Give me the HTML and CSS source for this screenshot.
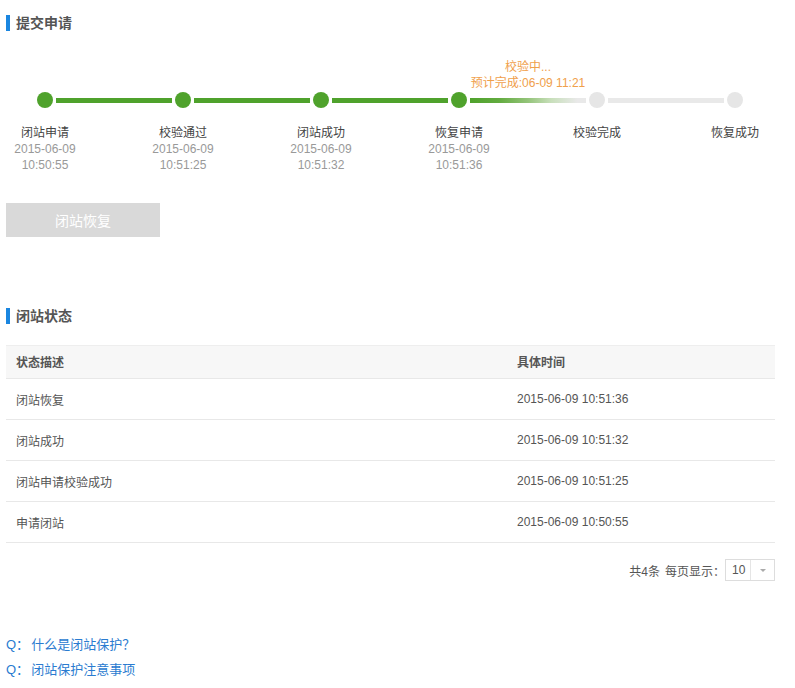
FILE: index.html
```html
<!DOCTYPE html>
<html lang="zh-CN">
<head>
<meta charset="utf-8">
<title>闭站保护</title>
<link rel="stylesheet" href="styles.css">
</head>
<body>
<div class="page">
  <h2 class="title">提交申请</h2>

  <div class="steps">
    <div class="note">校验中...<br>预计完成:06-09 11:21</div>

    <div class="step done first">
      <div class="track"><span class="half l"></span><span class="dot"></span><span class="half r"></span></div>
      <div class="label">闭站申请</div>
      <div class="time">2015-06-09<br>10:50:55</div>
    </div>
    <div class="step done">
      <div class="track"><span class="half l"></span><span class="dot"></span><span class="half r"></span></div>
      <div class="label">校验通过</div>
      <div class="time">2015-06-09<br>10:51:25</div>
    </div>
    <div class="step done">
      <div class="track"><span class="half l"></span><span class="dot"></span><span class="half r"></span></div>
      <div class="label">闭站成功</div>
      <div class="time">2015-06-09<br>10:51:32</div>
    </div>
    <div class="step done current">
      <div class="track"><span class="half l"></span><span class="dot"></span><span class="half r"></span></div>
      <div class="label">恢复申请</div>
      <div class="time">2015-06-09<br>10:51:36</div>
    </div>
    <div class="step todo next">
      <div class="track"><span class="half l"></span><span class="dot"></span><span class="half r"></span></div>
      <div class="label">校验完成</div>
    </div>
    <div class="step todo last">
      <div class="track"><span class="half l"></span><span class="dot"></span><span class="half r"></span></div>
      <div class="label">恢复成功</div>
    </div>
  </div>

  <button class="btn" type="button" disabled>闭站恢复</button>

  <h2 class="title second">闭站状态</h2>

  <div class="table">
    <div class="row head"><div class="cell">状态描述</div><div class="cell">具体时间</div></div>
    <div class="row"><div class="cell">闭站恢复</div><div class="cell">2015-06-09 10:51:36</div></div>
    <div class="row"><div class="cell">闭站成功</div><div class="cell">2015-06-09 10:51:32</div></div>
    <div class="row"><div class="cell">闭站申请校验成功</div><div class="cell">2015-06-09 10:51:25</div></div>
    <div class="row"><div class="cell">申请闭站</div><div class="cell">2015-06-09 10:50:55</div></div>
  </div>

  <div class="pager">
    <span class="total">共4条</span>
    <span class="per">每页显示：</span>
    <div class="select"><span class="val">10</span><span class="arrow"></span></div>
  </div>

  <ul class="faq">
    <li><a href="#"><span class="q">Q：</span>什么是闭站保护？</a></li>
    <li><a href="#"><span class="q">Q：</span>闭站保护注意事项</a></li>
  </ul>
</div>
</body>
</html>
```

FILE: styles.css
```css
* { box-sizing: border-box; }
html, body { margin: 0; padding: 0; background: #fff; }
body {
  font-family: Arial, "Liberation Sans", "Noto Sans CJK SC", sans-serif;
  font-size: 12px;
  color: #555;
}
.page {
  width: 775px;
  padding: 15px 0 0 6px;
}
.title {
  margin: 0;
  height: 16px;
  line-height: 16px;
  font-size: 14px;
  font-weight: bold;
  color: #555;
  border-left: 4px solid #1a86e0;
  padding-left: 6px;
}
.title.second { margin-top: 71px; }

/* steps */
.steps {
  display: grid;
  grid-template-columns: repeat(6, 138px);
  margin: 29px 0 0 -30px;
}
.note {
  grid-column: 4 / 6;
  grid-row: 1;
  text-align: center;
  color: #f0a04b;
  line-height: 16px;
  font-size: 12px;
  margin-top: -1px;
  margin-bottom: 1px;
}
.step {
  grid-row: 2;
  display: flex;
  flex-direction: column;
  align-items: center;
}
.track {
  display: flex;
  align-items: center;
  width: 100%;
  height: 16px;
}
.half { flex: 1; height: 5px; }
.half.l { margin-right: 3px; }
.half.r { margin-left: 3px; }
.dot {
  width: 16px;
  height: 16px;
  border-radius: 50%;
  flex: none;
}
.done .dot { background: #4fa22c; }
.done .half { background: #4fa22c; }
.first .half.l { background: transparent; }
.current .half.r { background: linear-gradient(to right, #4fa22c 0%, #62ab3f 50%, #94c47a 100%); }
.todo .dot { background: #e6e6e6; }
.todo .half { background: #e9e9e9; }
.next .half.l { background: linear-gradient(to right, #94c47a 0%, #c8dfbb 40%, #e9e9e9 85%); }
.last .half.r { background: transparent; }
.label {
  margin-top: 17px;
  line-height: 16px;
  color: #444;
}
.time {
  line-height: 16px;
  color: #999;
  text-align: center;
}

/* button */
.btn {
  display: block;
  margin-top: 30px;
  width: 154px;
  height: 34px;
  border: 0;
  background: #d9d9d9;
  color: #fff;
  font-family: inherit;
  font-size: 14px;
  padding: 0;
}

/* table */
.table {
  margin-top: 21px;
  width: 769px;
}
.row {
  display: grid;
  grid-template-columns: 501px 1fr;
  height: 41px;
  border-bottom: 1px solid #e8e8e8;
  align-items: center;
  color: #555;
}
.row.head {
  height: 34px;
  border-top: 1px solid #eee;
  background: #f7f7f7;
  font-weight: bold;
  padding-bottom: 2px;
}
.cell { padding-left: 10px; }

/* pager */
.pager {
  width: 769px;
  margin-top: 16px;
  display: flex;
  justify-content: flex-end;
  align-items: center;
  color: #555;
}
.total { margin-right: 5px; }
.select {
  display: flex;
  width: 50px;
  height: 22px;
  border: 1px solid #ddd;
}
.val {
  width: 25px;
  line-height: 20px;
  padding-left: 6px;
  color: #555;
  border-right: 1px solid #e5e5e5;
}
.arrow {
  flex: 1;
  display: flex;
  align-items: center;
  justify-content: center;
}
.arrow::after {
  content: "";
  border-left: 3px solid transparent;
  border-right: 3px solid transparent;
  border-top: 3px solid #aaa;
}

/* faq */
.faq {
  list-style: none;
  margin: 51px 0 0;
  padding: 0;
  font-size: 13px;
  font-family: "Noto Sans CJK SC", sans-serif;
}
.faq li { line-height: 24px; }
.faq .q { font-family: Arial, "Liberation Sans", "Noto Sans CJK SC", sans-serif; margin-right: 2px; }
.faq a {
  color: #2a7bd0;
  text-decoration: none;
}
```
